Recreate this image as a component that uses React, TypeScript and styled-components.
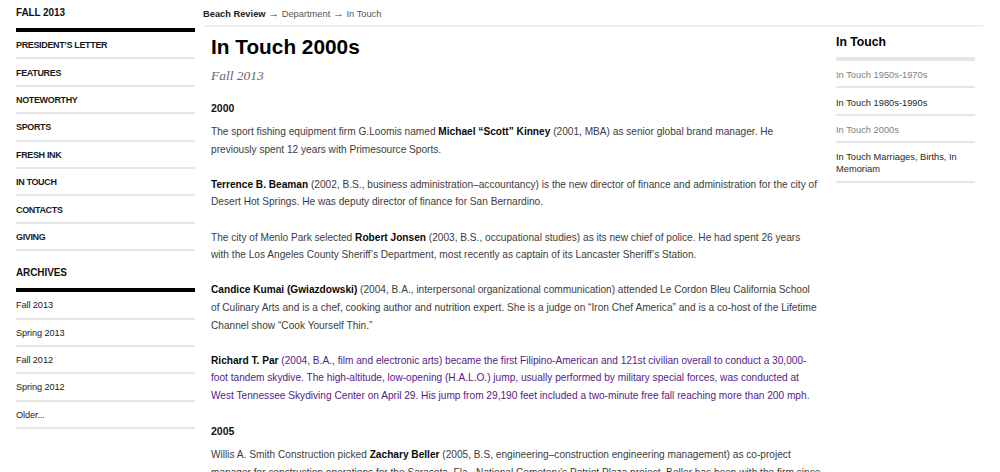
import React from "react";
import styled, { createGlobalStyle } from "styled-components";

const Global = createGlobalStyle`
  html, body { margin: 0; padding: 0; background: #fff; }
  body { font-family: "Liberation Sans", Arial, sans-serif; color: #333; }
  * { box-sizing: border-box; }
`;

const Page = styled.div`
  display: flex;
  align-items: flex-start;
  padding-left: 16px;
`;

const Sidebar = styled.nav`
  width: 179px;
  flex: none;
`;

const SideTitle = styled.div<{ $top?: number }>`
  font-weight: bold;
  font-size: 10px;
  letter-spacing: -0.1px;
  line-height: 12px;
  color: #111;
  padding-top: ${(p) => p.$top ?? 7}px;
  padding-bottom: 9px;
  border-bottom: 4px solid #000;
`;

const SideList = styled.ul`
  list-style: none;
  margin: 0;
  padding: 0;
`;

const SideItem = styled.li<{ $caps?: boolean }>`
  height: 27.4px;
  display: flex;
  align-items: center;
  border-bottom: 2px solid #e6e6e6;
  font-size: ${(p) => (p.$caps ? "9px" : "9.2px")};
  font-weight: ${(p) => (p.$caps ? "bold" : "normal")};
  letter-spacing: ${(p) => (p.$caps ? "-0.35px" : "-0.1px")};
  color: #1a1a1a;
  padding-top: 1px;
`;

const Main = styled.div`
  margin-left: 8px;
  width: 780px;
  flex: none;
`;

const Crumbs = styled.div`
  height: 27px;
  padding-top: 8px;
  font-size: 9.3px;
  line-height: 11px;
  color: #555;
  border-bottom: 2px solid #efefef;
`;

const CrumbHome = styled.b`
  color: #222;
`;

const Arrow = styled.span`
  font-size: 11px;
  color: #444;
`;

const Columns = styled.div`
  display: flex;
  align-items: flex-start;
`;

const Article = styled.article`
  width: 618px;
  padding-left: 8px;
  flex: none;
`;

const Title = styled.h1`
  margin: 8px 0 0;
  font-size: 20.8px;
  line-height: 24px;
  font-weight: bold;
  color: #000;
`;

const Issue = styled.div`
  margin-top: 8px;
  font-family: "Liberation Serif", "DejaVu Serif", serif;
  font-style: italic;
  font-size: 13.5px;
  line-height: 18px;
  color: #666;
`;

const Year = styled.h2<{ $first?: boolean }>`
  margin: ${(p) => (p.$first ? "14px" : "15px")} 0 6px;
  font-size: 10.5px;
  line-height: 18px;
  font-weight: bold;
  color: #111;
`;

const Para = styled.p<{ $visited?: boolean }>`
  margin: 0 0 17.6px;
  font-size: 10.15px;
  line-height: 17.6px;
  color: ${(p) => (p.$visited ? "#551a8b" : "#3c3c3c")};
`;

const Name = styled.b`
  color: #0a0a0a;
`;

const Aside = styled.aside`
  margin-left: 15px;
  width: 139px;
  flex: none;
`;

const AsideTitle = styled.h3`
  margin: 0;
  padding: 8px 0 8px;
  font-size: 12.2px;
  line-height: 14px;
  font-weight: bold;
  color: #000;
  border-bottom: 4px solid #e6e6e6;
`;

const AsideItem = styled.li<{ $dim?: boolean }>`
  padding: 8.2px 0 5.2px;
  font-size: 9.3px;
  line-height: 12px;
  color: ${(p) => (p.$dim ? "#808080" : "#1f1f1f")};
  border-bottom: 2px solid #e6e6e6;
`;

const sections = [
  "PRESIDENT\u2019S LETTER",
  "FEATURES",
  "NOTEWORTHY",
  "SPORTS",
  "FRESH INK",
  "IN TOUCH",
  "CONTACTS",
  "GIVING",
];

const archives = ["Fall 2013", "Spring 2013", "Fall 2012", "Spring 2012", "Older..."];

const related = [
  { label: "In Touch 1950s-1970s", dim: true },
  { label: "In Touch 1980s-1990s", dim: false },
  { label: "In Touch 2000s", dim: true },
  { label: "In Touch Marriages, Births, In Memoriam", dim: false },
];

export default function App() {
  return (
    <>
      <Global />
      <Page>
        <Sidebar>
          <SideTitle>FALL 2013</SideTitle>
          <SideList>
            {sections.map((s) => (
              <SideItem key={s} $caps>
                {s}
              </SideItem>
            ))}
          </SideList>
          <SideTitle $top={16}>ARCHIVES</SideTitle>
          <SideList>
            {archives.map((s) => (
              <SideItem key={s}>{s}</SideItem>
            ))}
          </SideList>
        </Sidebar>
        <Main>
          <Crumbs>
            <CrumbHome>Beach Review</CrumbHome> <Arrow>{"\u2192"}</Arrow> Department <Arrow>{"\u2192"}</Arrow> In Touch
          </Crumbs>
          <Columns>
            <Article>
              <Title>In Touch 2000s</Title>
              <Issue>Fall 2013</Issue>
              <Year $first>2000</Year>
              <Para>
                The sport fishing equipment firm G.Loomis named <Name>Michael {"\u201c"}Scott{"\u201d"} Kinney</Name> (2001, MBA) as
                senior global brand manager. He previously spent 12 years with Primesource Sports.
              </Para>
              <Para>
                <Name>Terrence B. Beaman</Name> (2002, B.S., business administration{"\u2013"}accountancy) is the new director of
                finance and administration for the city of Desert Hot Springs. He was deputy director of finance for San
                Bernardino.
              </Para>
              <Para>
                The city of Menlo Park selected <Name>Robert Jonsen</Name> (2003, B.S., occupational studies) as its new chief of
                police. He had spent 26 years with the Los Angeles County Sheriff{"\u2019"}s Department, most recently as captain of
                its Lancaster Sheriff{"\u2019"}s Station.
              </Para>
              <Para>
                <Name>Candice Kumai (Gwiazdowski)</Name> (2004, B.A., interpersonal organizational communication) attended Le
                Cordon Bleu California School of Culinary Arts and is a chef, cooking author and nutrition expert. She is a judge
                on {"\u201c"}Iron Chef America{"\u201d"} and is a co-host of the Lifetime Channel show {"\u201c"}Cook Yourself Thin.{"\u201d"}
              </Para>
              <Para $visited>
                <Name>Richard T. Par</Name> (2004, B.A., film and electronic arts) became the first Filipino-American and 121st
                civilian overall to conduct a 30,000-foot tandem skydive. The high-altitude, low-opening (H.A.L.O.) jump, usually
                performed by military special forces, was conducted at West Tennessee Skydiving Center on April 29. His jump from
                29,190 feet included a two-minute free fall reaching more than 200 mph.
              </Para>
              <Year>2005</Year>
              <Para>
                Willis A. Smith Construction picked <Name>Zachary Beller</Name> (2005, B.S, engineering{"\u2013"}construction
                engineering management) as co-project manager for construction operations for the Sarasota, Fla., National
                Cemetery{"\u2019"}s Patriot Plaza project. Beller has been with the firm since 2006.
              </Para>
            </Article>
            <Aside>
              <AsideTitle>In Touch</AsideTitle>
              <SideList>
                {related.map((r) => (
                  <AsideItem key={r.label} $dim={r.dim}>
                    {r.label}
                  </AsideItem>
                ))}
              </SideList>
            </Aside>
          </Columns>
        </Main>
      </Page>
    </>
  );
}
